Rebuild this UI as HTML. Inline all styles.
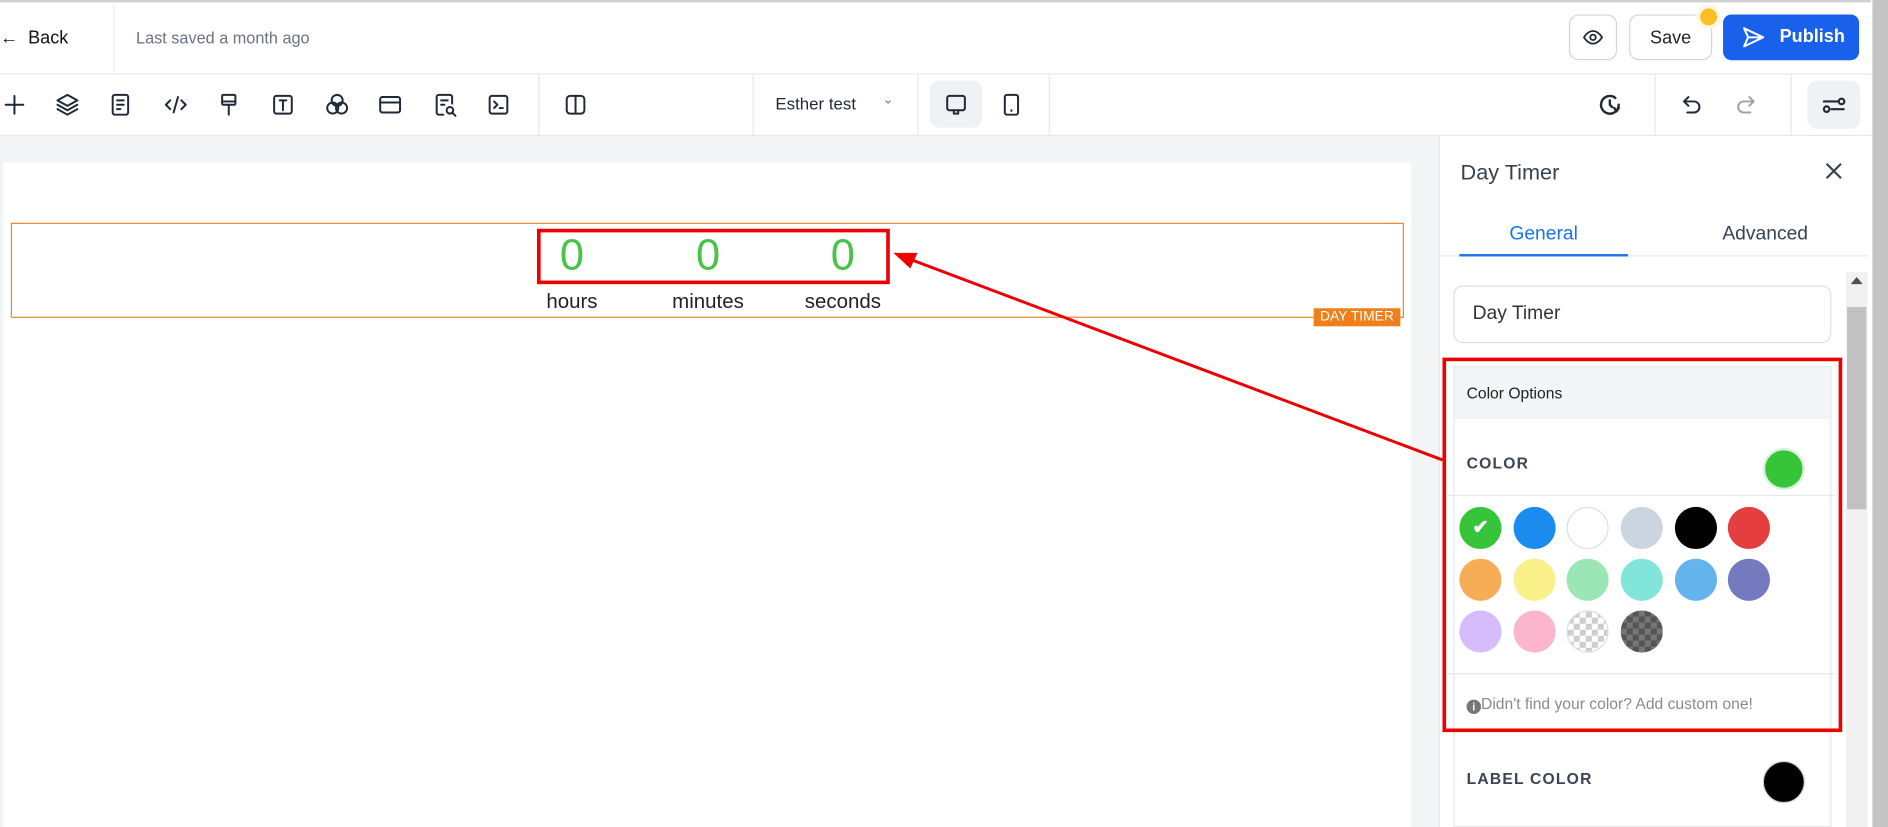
<!DOCTYPE html>
<html><head><meta charset="utf-8">
<style>
*{box-sizing:border-box;margin:0;padding:0}
html,body{width:1888px;height:827px;overflow:hidden;background:#fff;font-family:"Liberation Sans",sans-serif}
#w{position:absolute;left:0;top:0;width:1568px;height:687px;transform:scale(1.20408);transform-origin:0 0;background:#fff;overflow:hidden}
.a{position:absolute}
.ic{position:absolute;top:76px;width:22px;height:22px}
.ic svg{width:22px;height:22px;fill:none;stroke:#1f2937;stroke-width:1.8;stroke-linecap:round;stroke-linejoin:round}
.sw{position:absolute;width:35px;height:35px;border-radius:50%}
.vs{position:absolute;top:62px;height:50px;width:1px;background:#e5e7eb}
.chk{background-color:#fff;background-image:linear-gradient(45deg,#ccc 25%,transparent 25%,transparent 75%,#ccc 75%),linear-gradient(45deg,#ccc 25%,transparent 25%,transparent 75%,#ccc 75%);background-size:10px 10px;background-position:0 0,5px 5px}
.chkd{background-color:#555;background-image:linear-gradient(45deg,#777 25%,transparent 25%,transparent 75%,#777 75%),linear-gradient(45deg,#777 25%,transparent 25%,transparent 75%,#777 75%);background-size:10px 10px;background-position:0 0,5px 5px}
</style></head><body><div id="w">
<div class="a" style="left:0;top:0;width:1568px;height:2px;background:#d1d1d1"></div>
<div class="a" style="left:0;top:23px;font-size:15px;color:#111">&#8592;&nbsp; Back</div>
<div class="a" style="left:94px;top:4px;width:1px;height:56px;background:#e5e7eb"></div>
<div class="a" style="left:113px;top:24px;font-size:13.5px;color:#6b7280">Last saved a month ago</div>
<div class="a" style="left:1303px;top:12px;width:40px;height:38px;border:1px solid #d1d5db;border-radius:8px"></div>
<svg class="a" style="left:1313px;top:22px" width="20" height="18" viewBox="0 0 24 24" fill="none" stroke="#1f2937" stroke-width="2"><path d="M2 12s4-7 10-7 10 7 10 7-4 7-10 7S2 12 2 12z"/><circle cx="12" cy="12" r="3"/></svg>
<div class="a" style="left:1353px;top:12px;width:69px;height:38px;border:1px solid #d1d5db;border-radius:8px;font-size:15px;color:#222;text-align:center;line-height:37px">Save</div>
<div class="a" style="left:1412px;top:7px;width:14px;height:14px;border-radius:50%;background:#fbbf24;box-shadow:0 0 0 3px #fef6e0"></div>
<div class="a" style="left:1431px;top:12px;width:113px;height:38px;background:#1960ea;border-radius:7px;color:#fff;font-weight:bold;font-size:15px;line-height:37px;padding-left:47px">Publish</div>
<svg class="a" style="left:1445px;top:21px" width="22" height="20" viewBox="0 0 24 24" fill="none" stroke="#fff" stroke-width="2" stroke-linejoin="round"><path d="M3 3l19 9-19 9 4-9z M7 12h15"/></svg>
<div class="a" style="left:0;top:61px;width:1568px;height:1px;background:#e5e7eb"></div>
<div class="ic" style="left:1px"><svg viewBox="0 0 24 24"><path d="M12 4v16M4 12h16"/></svg></div>
<div class="ic" style="left:45px"><svg viewBox="0 0 24 24"><path d="M12 3l9 5-9 5-9-5z M3 12l9 5 9-5 M3 16l9 5 9-5"/></svg></div>
<div class="ic" style="left:89px"><svg viewBox="0 0 24 24"><rect x="5" y="3" width="14" height="18" rx="2"/><path d="M9 8h6M9 12h6M9 16h3"/></svg></div>
<div class="ic" style="left:135px"><svg viewBox="0 0 24 24"><path d="M7 8l-4 4 4 4M17 8l4 4-4 4M14 5l-4 14"/></svg></div>
<div class="ic" style="left:179px"><svg viewBox="0 0 24 24"><rect x="6" y="3" width="12" height="9" rx="1"/><path d="M6 9h12M12 12v9"/></svg></div>
<div class="ic" style="left:224px"><svg viewBox="0 0 24 24"><rect x="4" y="4" width="16" height="16" rx="2"/><path d="M9 8h6M12 8v9"/></svg></div>
<div class="ic" style="left:269px"><svg viewBox="0 0 24 24"><circle cx="12" cy="8" r="5"/><circle cx="8" cy="15" r="5"/><circle cx="16" cy="15" r="5"/></svg></div>
<div class="ic" style="left:313px"><svg viewBox="0 0 24 24"><rect x="3" y="5" width="18" height="14" rx="2"/><path d="M3 10h18"/></svg></div>
<div class="ic" style="left:359px"><svg viewBox="0 0 24 24"><path d="M10 21H6a2 2 0 0 1-2-2V5a2 2 0 0 1 2-2h10a2 2 0 0 1 2 2v6M8 8h6M8 12h3"/><circle cx="16" cy="17" r="3"/><path d="M18 19l3 3"/></svg></div>
<div class="ic" style="left:403px"><svg viewBox="0 0 24 24"><rect x="4" y="4" width="16" height="16" rx="2"/><path d="M8 9l3 3-3 3M13 15h3"/></svg></div>
<div class="vs" style="left:447px"></div>
<div class="ic" style="left:467px"><svg viewBox="0 0 24 24"><rect x="4" y="4" width="16" height="16" rx="3"/><path d="M12 4v16"/></svg></div>
<div class="vs" style="left:625px"></div>
<div class="a" style="left:644px;top:78px;font-size:14px;color:#1f2937">Esther test</div>
<div class="a" style="left:733px;top:76px;font-size:11px;color:#6b7280">&#8964;</div>
<div class="vs" style="left:762px"></div>
<div class="a" style="left:772px;top:67px;width:44px;height:39px;background:#f0f1f4;border-radius:8px"></div>
<div class="ic" style="left:783px"><svg viewBox="0 0 24 24"><rect x="4" y="4" width="16" height="13" rx="2"/><path d="M10 17v3h4v-3"/></svg></div>
<div class="ic" style="left:829px"><svg viewBox="0 0 24 24"><rect x="6" y="3" width="12" height="18" rx="2"/><path d="M12 17v.5"/></svg></div>
<div class="vs" style="left:871px"></div>
<div class="ic" style="left:1326px"><svg viewBox="0 0 24 24" style="stroke-width:2.2"><path d="M20 12a8 8 0 1 1-3-6.2M12 8v4l2 2M20 15l-2 3-2-3"/></svg></div>
<div class="vs" style="left:1374px"></div>
<div class="ic" style="left:1394px"><svg viewBox="0 0 24 24"><path d="M9 5L5 9l4 4M5 9h9a5 5 0 0 1 0 10H8"/></svg></div>
<div class="ic" style="left:1439px"><svg viewBox="0 0 24 24" style="stroke:#9ca3af"><path d="M15 5l4 4-4 4M19 9h-9a5 5 0 0 0 0 10h6"/></svg></div>
<div class="vs" style="left:1487px"></div>
<div class="a" style="left:1501px;top:67px;width:44px;height:40px;background:#f0f1f4;border-radius:8px"></div>
<div class="ic" style="left:1512px"><svg viewBox="0 0 24 24" style="stroke-width:2"><path d="M3 9h13M10 16h11"/><circle cx="19" cy="9" r="2.5"/><circle cx="5.5" cy="16" r="2.5"/></svg></div>
<div class="a" style="left:0;top:112px;width:1568px;height:1px;background:#e5e7eb"></div>
<div class="a" style="left:0;top:113px;width:1195px;height:574px;background:#f3f4f6"></div>
<div class="a" style="left:3px;top:135px;width:1169px;height:552px;background:#fff"></div>
<div class="a" style="left:9px;top:185px;width:1157px;height:79px;border:1px solid #e8862a"></div>
<div class="a" style="left:1091px;top:256px;width:72px;height:15px;background:#f07f1a;color:#fff;font-size:11.5px;line-height:15px;text-align:center">DAY TIMER</div>
<div class="a" style="left:440px;top:190px;width:70px;text-align:center;font-size:36px;color:#45c445;line-height:44px">0</div>
<div class="a" style="left:553px;top:190px;width:70px;text-align:center;font-size:36px;color:#45c445;line-height:44px">0</div>
<div class="a" style="left:665px;top:190px;width:70px;text-align:center;font-size:36px;color:#45c445;line-height:44px">0</div>
<div class="a" style="left:430px;top:241px;width:90px;text-align:center;font-size:17px;color:#222">hours</div>
<div class="a" style="left:538px;top:241px;width:100px;text-align:center;font-size:17px;color:#222">minutes</div>
<div class="a" style="left:650px;top:241px;width:100px;text-align:center;font-size:17px;color:#222">seconds</div>
<div class="a" style="left:446px;top:190px;width:293px;height:46px;border:3px solid #e00"></div>
<div class="a" style="left:1195px;top:113px;width:373px;height:574px;background:#fff;border-left:1px solid #e5e7eb"></div>
<div class="a" style="left:1213px;top:133px;font-size:18px;color:#374151">Day Timer</div>
<svg class="a" style="left:1515px;top:134px" width="16" height="16" viewBox="0 0 16 16" stroke="#374151" stroke-width="1.8"><path d="M2 2l12 12M14 2L2 14"/></svg>
<div class="a" style="left:1212px;top:186px;width:140px;text-align:center;font-size:16px;color:#1a73e8">General</div>
<div class="a" style="left:1396px;top:186px;width:140px;text-align:center;font-size:16px;color:#374151">Advanced</div>
<div class="a" style="left:1196px;top:212px;width:356px;height:1px;background:#e5e7eb"></div>
<div class="a" style="left:1212px;top:211px;width:140px;height:2px;background:#1a73e8"></div>
<div class="a" style="left:1533px;top:226px;width:18px;height:461px;background:#f1f1f1"></div>
<div class="a" style="left:1537px;top:230px;width:0;height:0;border-left:5px solid transparent;border-right:5px solid transparent;border-bottom:6px solid #505050"></div>
<div class="a" style="left:1534px;top:255px;width:16px;height:168px;background:#c1c1c1"></div>
<div class="a" style="left:1555px;top:0;width:13px;height:687px;background:#c4c4c4"></div>
<div class="a" style="left:1554px;top:0;width:1px;height:687px;background:#fff"></div>
<div class="a" style="left:1207px;top:237px;width:314px;height:48px;border:1px solid #dcdfe3;border-radius:8px;font-size:16px;color:#333;line-height:46px;padding-left:15px">Day Timer</div>
<div class="a" style="left:1207px;top:304px;width:314px;height:383px;border:1px solid #e5e7eb"></div>
<div class="a" style="left:1208px;top:305px;width:312px;height:43px;background:#f3f4f6;font-size:13px;color:#222;line-height:43px;padding-left:10px">Color Options</div>
<div class="a" style="left:1218px;top:377px;font-size:13px;font-weight:bold;color:#3b4453;letter-spacing:1px">COLOR</div>
<div class="sw" style="left:1464px;top:372px;background:#36c43a;border:2px solid #d9f0da"></div>
<div class="a" style="left:1202px;top:411px;width:322px;height:1px;background:#e5e7eb"></div>
<div class="a" style="left:1202px;top:559px;width:322px;height:1px;background:#e5e7eb"></div>
<div class="sw" style="left:1212px;top:421px;background:#36c43a;color:#fff;text-align:center;line-height:35px;font-size:16px;font-weight:bold">&#10004;</div>
<div class="sw" style="left:1257px;top:421px;background:#1a8cf0"></div>
<div class="sw" style="left:1301px;top:421px;background:#fff;border:1px solid #ddd"></div>
<div class="sw" style="left:1346px;top:421px;background:#cbd5e0"></div>
<div class="sw" style="left:1391px;top:421px;background:#000"></div>
<div class="sw" style="left:1435px;top:421px;background:#e53e3e"></div>
<div class="sw" style="left:1212px;top:464px;background:#f6ad55"></div>
<div class="sw" style="left:1257px;top:464px;background:#faf089"></div>
<div class="sw" style="left:1301px;top:464px;background:#9ae6b4"></div>
<div class="sw" style="left:1346px;top:464px;background:#81e6d9"></div>
<div class="sw" style="left:1391px;top:464px;background:#63b3ed"></div>
<div class="sw" style="left:1435px;top:464px;background:#7579bd"></div>
<div class="sw" style="left:1212px;top:507px;background:#d6bcfa"></div>
<div class="sw" style="left:1257px;top:507px;background:#fbb6ce"></div>
<div class="sw chk" style="left:1301px;top:507px;border:1px solid #ddd"></div>
<div class="sw chkd" style="left:1346px;top:507px"></div>
<div class="a" style="left:1218px;top:578px;font-size:13px;color:#8a8a8a;line-height:14px"><span style="display:inline-block;width:12px;height:12px;border-radius:50%;background:#777;color:#fff;font-size:9px;text-align:center;line-height:12px;font-weight:bold;vertical-align:-1px">i</span>Didn't find your color? Add custom one!</div>
<div class="a" style="left:1198px;top:297px;width:332px;height:311px;border:3px solid #e00"></div>
<div class="a" style="left:1218px;top:639px;font-size:13px;font-weight:bold;color:#3b4453;letter-spacing:1px">LABEL COLOR</div>
<div class="sw" style="left:1464px;top:632px;background:#000;border:1px solid #ccc"></div>
<svg class="a" style="left:0;top:0" width="1568" height="687"><line x1="1198" y1="382" x2="755" y2="215" stroke="#e00" stroke-width="2.5"/><polygon points="742,210 762,210 756,223" fill="#e00"/></svg>
</div></body></html>
